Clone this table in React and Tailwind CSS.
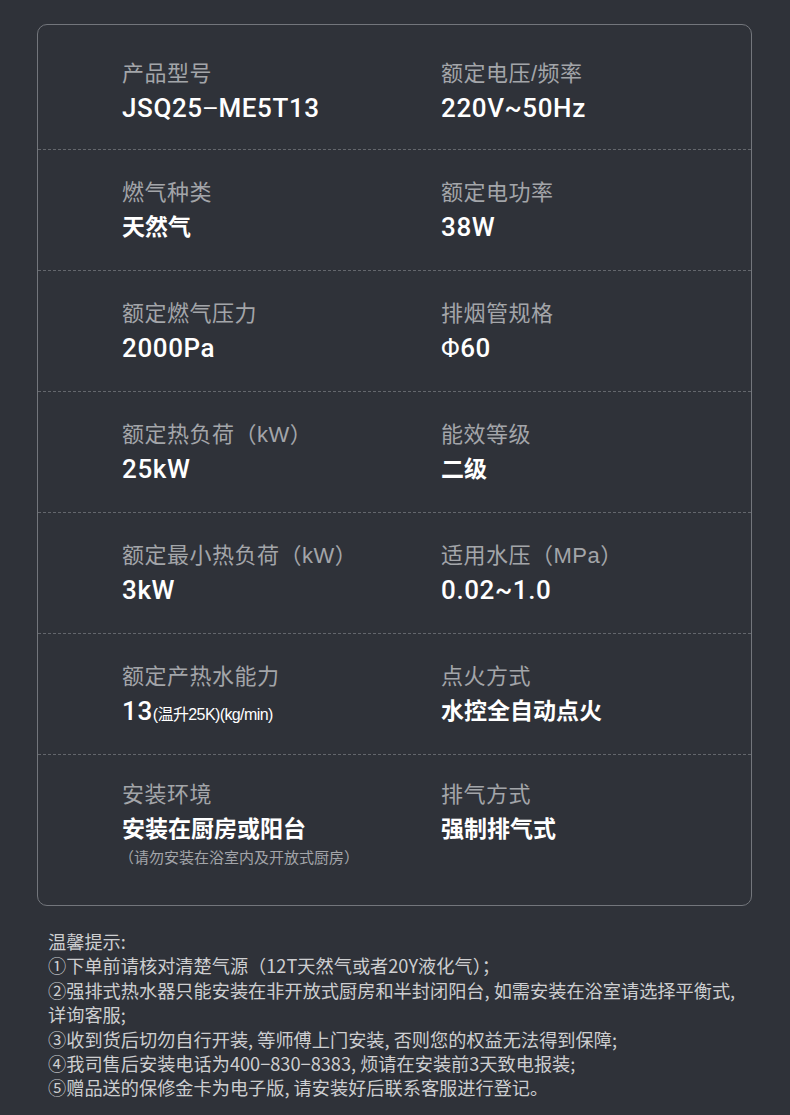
const specs = [
  [
    { label: "产品型号", value: <>JSQ25<span className="font-['Liberation_Sans'] font-normal">−</span>ME5T13</> },
    { label: "额定电压/频率", value: "220V~50Hz" },
  ],
  [
    { label: "燃气种类", value: "天然气", cn: true },
    { label: "额定电功率", value: "38W" },
  ],
  [
    { label: "额定燃气压力", value: "2000Pa" },
    { label: "排烟管规格", value: <><span className="font-normal">Φ</span>60</> },
  ],
  [
    { label: "额定热负荷（kW）", value: "25kW" },
    { label: "能效等级", value: "二级", cn: true },
  ],
  [
    { label: "额定最小热负荷（kW）", value: "3kW" },
    { label: "适用水压（MPa）", value: "0.02~1.0" },
  ],
  [
    { label: "额定产热水能力", value: "13", suffix: "(温升25K)(kg/min)" },
    { label: "点火方式", value: "水控全自动点火", cn: true },
  ],
  [
    {
      label: "安装环境",
      value: "安装在厨房或阳台",
      cn: true,
      note: "（请勿安装在浴室内及开放式厨房）",
    },
    { label: "排气方式", value: "强制排气式", cn: true },
  ],
];

const tips = [
  "温馨提示:",
  "①下单前请核对清楚气源（12T天然气或者20Y液化气）；",
  "②强排式热水器只能安装在非开放式厨房和半封闭阳台, 如需安装在浴室请选择平衡式,",
  "详询客服;",
  "③收到货后切勿自行开装, 等师傅上门安装, 否则您的权益无法得到保障;",
  "④我司售后安装电话为400−830−8383, 烦请在安装前3天致电报装;",
  "⑤赠品送的保修金卡为电子版, 请安装好后联系客服进行登记。",
];

const Cell = ({ item }) => (
  <div className="flex flex-col">
    <div className="text-[22px] leading-[30px] text-[#a3a5a9] tracking-[0.5px]">
      {item.label}
    </div>
    {item.cn ? (
      <div className="mt-[2px] text-[23px] leading-[34px] text-white font-bold">
        {item.value}
      </div>
    ) : (
      <div
        className="mt-[2px] text-[26px] leading-[34px] text-white font-medium tracking-[0.6px]"
        style={{ fontFamily: 'Roboto, "Noto Sans CJK SC", sans-serif' }}
      >
        {item.value}
        {item.suffix && (
          <span
            className="text-[16px] font-normal tracking-[-0.6px]"
            style={{ fontFamily: '"Liberation Sans", "Noto Sans CJK SC", sans-serif' }}
          >
            {item.suffix}
          </span>
        )}
      </div>
    )}
    {item.note && (
      <div className="-ml-[3px] mt-[2px] text-[15px] leading-[20px] text-[#a3a5a9]">
        {item.note}
      </div>
    )}
  </div>
);

const App = () => {
  return (
    <div
      className="w-[790px] h-[1115px] bg-[#2f3239] pt-[24px] overflow-hidden"
      style={{ fontFamily: '"Liberation Sans", "Noto Sans CJK SC", sans-serif' }}
    >
      <div className="ml-[37px] w-[715px] h-[882px] border-[1.5px] border-[#73767c] rounded-[10px] overflow-hidden">
        {specs.map((row, i) => {
          const last = i === specs.length - 1;
          return (
            <div
              key={i}
              className={`grid grid-cols-[319px_1fr] pl-[84px] ${
                i === 0 ? "h-[125px] pt-[34px]" : last ? "pt-[25px]" : "h-[121px] pt-[28px]"
              } ${last ? "" : "border-b border-dashed border-[#63666c]"}`}
            >
              <Cell item={row[0]} />
              <Cell item={row[1]} />
            </div>
          );
        })}
      </div>
      <div
        className="mt-[23px] pl-[48px] text-[18.2px] leading-[24.4px] text-[#cdced0]"
        style={{ fontFamily: '"Noto Sans CJK SC", sans-serif' }}
      >
        {tips.map((t, i) => (
          <div key={i} className="whitespace-nowrap">
            {t}
          </div>
        ))}
      </div>
    </div>
  );
};

export default App;
